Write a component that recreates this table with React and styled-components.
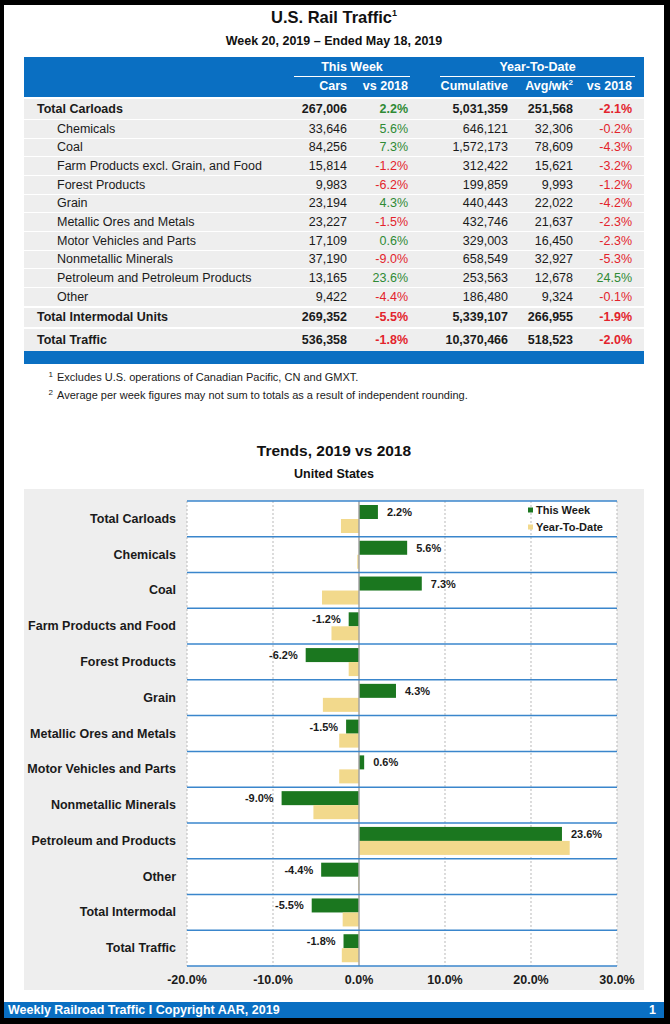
import React from 'react';
import styled, { createGlobalStyle } from 'styled-components';

const GlobalStyle = createGlobalStyle`
  html, body {
    margin: 0;
    padding: 0;
    background: #000000;
  }
  body {
    font-family: "Liberation Sans", Arial, Helvetica, sans-serif;
    color: #1a1a1a;
  }
`;

const BLUE = '#0a6fc2';
const GREEN_TXT = '#2f8a35';
const RED_TXT = '#e3232c';
const BAR_GREEN = '#1b771f';
const BAR_YELLOW = '#f2d98c';

const Page = styled.div`
  margin: 5px 6px 0 4px;
  width: 660px;
  height: 1013px;
  background: #ffffff;
  display: flex;
  flex-direction: column;
  align-items: center;
`;

const Title = styled.h1`
  margin: 2px 0 0;
  font-size: 16.5px;
  line-height: 20px;
  font-weight: 700;
  color: #111;

  sup {
    font-size: 9px;
    vertical-align: 7px;
    line-height: 0;
  }
`;

const Subtitle = styled.h2`
  margin: 6px 0 0;
  font-size: 12.5px;
  line-height: 16px;
  font-weight: 700;
  color: #111;
`;

const Table = styled.div`
  margin-top: 8px;
  width: 620px;
`;

const HeadBlock = styled.div`
  background: ${BLUE};
  color: #fff;
  font-weight: 700;
  font-size: 12.5px;
  padding-right: 12px;
`;

const Grid = styled.div`
  display: grid;
  grid-template-columns: 1fr 60px 61px 100px 65px 59px;
  align-items: center;
`;

const GroupHead = styled.div`
  grid-column: ${(p) => p.$span};
  height: 20px;
  line-height: 20px;
  text-align: center;
  border-bottom: 1.5px solid #ffffff;
  margin: ${(p) => p.$margin};
  box-sizing: border-box;
`;

const HeadCell = styled.div`
  grid-column: ${(p) => p.$col};
  text-align: right;
  height: 20px;
  line-height: 19px;

  sup {
    font-size: 8px;
    vertical-align: 5px;
    line-height: 0;
  }
`;

const Row = styled(Grid)`
  height: ${(p) => p.$h}px;
  background: #eeeeee;
  border-top: ${(p) => (p.$total ? 2 : 1)}px solid #ffffff;
  box-sizing: border-box;
  padding-right: 12px;
  font-size: 12.5px;
  font-weight: ${(p) => (p.$total ? 700 : 400)};
  color: #1a1a1a;
`;

const Label = styled.div`
  padding-left: ${(p) => (p.$indent ? 33 : 13)}px;
  white-space: nowrap;
`;

const Num = styled.div`
  text-align: right;
  white-space: nowrap;
  color: ${(p) => (p.$tone === 'neg' ? RED_TXT : p.$tone === 'pos' ? GREEN_TXT : 'inherit')};
`;

const TableFoot = styled.div`
  height: 13.5px;
  background: ${BLUE};
`;

const Notes = styled.div`
  margin-top: 4px;
  width: 620px;
  padding-left: 22px;
  box-sizing: border-box;
  font-size: 11px;
  line-height: 18px;
  color: #1a1a1a;
`;

const Note = styled.p`
  margin: 0;
  white-space: nowrap;
`;

const NoteMark = styled.sup`
  display: inline-block;
  width: 7px;
  margin-right: 4px;
  text-align: right;
  font-size: 8px;
  line-height: 0;
  vertical-align: 4px;
`;

const ChartTitle = styled.h2`
  margin: 37px 0 0;
  font-size: 15.5px;
  line-height: 20px;
  font-weight: 700;
  color: #111;
`;

const ChartSub = styled.div`
  margin-top: 5px;
  font-size: 12.5px;
  line-height: 16px;
  font-weight: 700;
  color: #111;
`;

const ChartPanel = styled.div`
  margin-top: 7px;
  width: 620px;
  background: #eeeeee;
  padding: 12px 0 2px;
  display: grid;
  grid-template-columns: 163px 430px 27px;
`;

const LabelCol = styled.div`
  display: flex;
  flex-direction: column;
`;

const CatLabel = styled.div`
  height: ${(p) => p.$h}px;
  display: flex;
  align-items: center;
  justify-content: flex-end;
  padding-right: 11px;
  font-size: 12.5px;
  font-weight: 700;
  color: #1a1a1a;
  white-space: nowrap;
`;

const Plot = styled.svg`
  display: block;
  overflow: visible;
  background: #ffffff;
`;

const AxisRow = styled.div`
  grid-column: 2;
  display: flex;
  margin: 6px 0 0 -43px;
  width: 516px;
`;

const AxisLabel = styled.div`
  width: 86px;
  text-align: center;
  font-size: 12.5px;
  line-height: 16px;
  font-weight: 700;
  color: #1a1a1a;
`;

const Footer = styled.div`
  margin-top: auto;
  align-self: stretch;
  height: 16px;
  background: ${BLUE};
  color: #ffffff;
  display: flex;
  justify-content: space-between;
  align-items: center;
  padding: 0 8px 0 4px;
  font-size: 12.5px;
  font-weight: 700;
`;

const rows = [
  { label: 'Total Carloads', total: true, h: 22, cars: '267,006', wk: '2.2%', cum: '5,031,359', avg: '251,568', ytd: '-2.1%' },
  { label: 'Chemicals', cars: '33,646', wk: '5.6%', cum: '646,121', avg: '32,306', ytd: '-0.2%' },
  { label: 'Coal', cars: '84,256', wk: '7.3%', cum: '1,572,173', avg: '78,609', ytd: '-4.3%' },
  { label: 'Farm Products excl. Grain, and Food', cars: '15,814', wk: '-1.2%', cum: '312,422', avg: '15,621', ytd: '-3.2%' },
  { label: 'Forest Products', cars: '9,983', wk: '-6.2%', cum: '199,859', avg: '9,993', ytd: '-1.2%' },
  { label: 'Grain', cars: '23,194', wk: '4.3%', cum: '440,443', avg: '22,022', ytd: '-4.2%' },
  { label: 'Metallic Ores and Metals', cars: '23,227', wk: '-1.5%', cum: '432,746', avg: '21,637', ytd: '-2.3%' },
  { label: 'Motor Vehicles and Parts', cars: '17,109', wk: '0.6%', cum: '329,003', avg: '16,450', ytd: '-2.3%' },
  { label: 'Nonmetallic Minerals', cars: '37,190', wk: '-9.0%', cum: '658,549', avg: '32,927', ytd: '-5.3%' },
  { label: 'Petroleum and Petroleum Products', cars: '13,165', wk: '23.6%', cum: '253,563', avg: '12,678', ytd: '24.5%' },
  { label: 'Other', cars: '9,422', wk: '-4.4%', cum: '186,480', avg: '9,324', ytd: '-0.1%' },
  { label: 'Total Intermodal Units', total: true, h: 21, cars: '269,352', wk: '-5.5%', cum: '5,339,107', avg: '266,955', ytd: '-1.9%' },
  { label: 'Total Traffic', total: true, h: 24, cars: '536,358', wk: '-1.8%', cum: '10,370,466', avg: '518,523', ytd: '-2.0%' },
];

const trends = [
  ['Total Carloads', 2.2, -2.1],
  ['Chemicals', 5.6, -0.2],
  ['Coal', 7.3, -4.3],
  ['Farm Products and Food', -1.2, -3.2],
  ['Forest Products', -6.2, -1.2],
  ['Grain', 4.3, -4.2],
  ['Metallic Ores and Metals', -1.5, -2.3],
  ['Motor Vehicles and Parts', 0.6, -2.3],
  ['Nonmetallic Minerals', -9.0, -5.3],
  ['Petroleum and Products', 23.6, 24.5],
  ['Other', -4.4, -0.1],
  ['Total Intermodal', -5.5, -1.9],
  ['Total Traffic', -1.8, -2.0],
];

const ROW_H = 35.77;
const PLOT_W = 430;
const ZERO = 172;
const UNIT = 8.6;
const ticks = ['-20.0%', '-10.0%', '0.0%', '10.0%', '20.0%', '30.0%'];

const tone = (v) => (v.startsWith('-') ? 'neg' : 'pos');

function TrafficTable() {
  return (
    <Table>
      <HeadBlock>
        <Grid>
          <GroupHead $span="2 / 4" $margin="0 -2px 0 7px">This Week</GroupHead>
          <GroupHead $span="4 / 7" $margin="0 -3px 0 32px">Year-To-Date</GroupHead>
        </Grid>
        <Grid>
          <HeadCell $col="2">Cars</HeadCell>
          <HeadCell $col="3">vs 2018</HeadCell>
          <HeadCell $col="4">Cumulative</HeadCell>
          <HeadCell $col="5">Avg/wk<sup>2</sup></HeadCell>
          <HeadCell $col="6">vs 2018</HeadCell>
        </Grid>
      </HeadBlock>
      {rows.map((r) => (
        <Row key={r.label} $total={r.total} $h={r.h || 18.67}>
          <Label $indent={!r.total}>{r.label}</Label>
          <Num>{r.cars}</Num>
          <Num $tone={tone(r.wk)}>{r.wk}</Num>
          <Num>{r.cum}</Num>
          <Num>{r.avg}</Num>
          <Num $tone={tone(r.ytd)}>{r.ytd}</Num>
        </Row>
      ))}
      <TableFoot />
    </Table>
  );
}

function TrendChart() {
  const height = ROW_H * trends.length;
  const bar = (v) => ({ x: v < 0 ? ZERO + v * UNIT : ZERO, w: Math.max(Math.abs(v) * UNIT, 1) });

  return (
    <ChartPanel>
      <LabelCol>
        {trends.map(([name]) => (
          <CatLabel key={name} $h={ROW_H}>{name}</CatLabel>
        ))}
      </LabelCol>
      <Plot width={PLOT_W} height={height} viewBox={`0 0 ${PLOT_W} ${height}`}>
        {[0, 86, 258, 344, 430].map((x) => (
          <line key={x} x1={x} x2={x} y1={0} y2={height} stroke="#b9b9b9" strokeWidth="1" strokeDasharray="2 2" />
        ))}
        {trends.map(([name, wk, ytd], i) => {
          const top = i * ROW_H;
          const g = bar(wk);
          const y = bar(ytd);
          const lx = wk < 0 ? g.x - 8 : g.x + g.w + 9;
          return (
            <g key={name}>
              <rect x={g.x} y={top + 4} width={g.w} height={14} fill={BAR_GREEN} />
              <rect x={y.x} y={top + 18} width={y.w} height={14} fill={BAR_YELLOW} />
              <text
                x={lx}
                y={top + 11}
                dominantBaseline="central"
                textAnchor={wk < 0 ? 'end' : 'start'}
                fontSize="11"
                fontWeight="700"
                fill="#1a1a1a"
                fontFamily='"Liberation Sans", Arial, sans-serif'
              >
                {`${wk.toFixed(1)}%`}
              </text>
            </g>
          );
        })}
        <line x1={ZERO} x2={ZERO} y1={0} y2={height} stroke="#a3a3a3" strokeWidth="1.5" />
        {trends.map((t, i) => (
          <line key={`h${i}`} x1={0} x2={PLOT_W} y1={i * ROW_H} y2={i * ROW_H} stroke="#3a86cc" strokeWidth="1.5" />
        ))}
        <line x1={0} x2={PLOT_W} y1={height} y2={height} stroke="#3a86cc" strokeWidth="1.5" />
        <g fontFamily='"Liberation Sans", Arial, sans-serif' fontSize="11" fontWeight="700" fill="#1a1a1a">
          <rect x={341} y={6.5} width={5} height={5} fill={BAR_GREEN} />
          <text x={349} y={9} dominantBaseline="central">This Week</text>
          <rect x={341} y={23.5} width={5} height={5} fill={BAR_YELLOW} />
          <text x={349} y={26} dominantBaseline="central">Year-To-Date</text>
        </g>
      </Plot>
      <div />
      <div />
      <AxisRow>
        {ticks.map((t) => (
          <AxisLabel key={t}>{t}</AxisLabel>
        ))}
      </AxisRow>
    </ChartPanel>
  );
}

export default function App() {
  return (
    <>
      <GlobalStyle />
      <Page>
        <Title>U.S. Rail Traffic<sup>1</sup></Title>
        <Subtitle>Week 20, 2019 – Ended May 18, 2019</Subtitle>
        <TrafficTable />
        <Notes>
          <Note><NoteMark>1</NoteMark>Excludes U.S. operations of Canadian Pacific, CN and GMXT.</Note>
          <Note><NoteMark>2</NoteMark>Average per week figures may not sum to totals as a result of independent rounding.</Note>
        </Notes>
        <ChartTitle>Trends, 2019 vs 2018</ChartTitle>
        <ChartSub>United States</ChartSub>
        <TrendChart />
        <Footer>
          <span>Weekly Railroad Traffic I Copyright AAR, 2019</span>
          <span>1</span>
        </Footer>
      </Page>
    </>
  );
}
